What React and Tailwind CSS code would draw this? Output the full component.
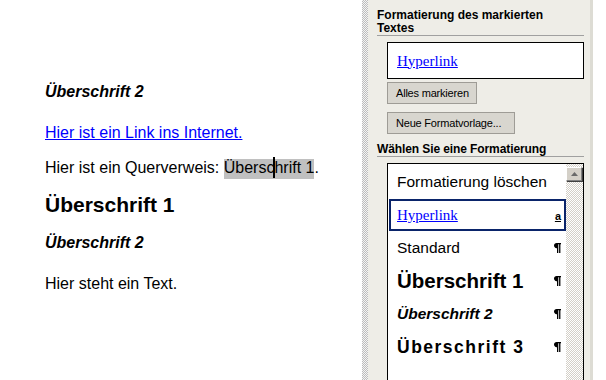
import React from "react";

const Pil = () => (
  <svg width="7" height="10" viewBox="0 0 7 10" className="self-end mb-[9px]">
    <path d="M7 0H2.6C1.1 0 0 1.1 0 2.6S1.1 5.2 2.6 5.2H3V10H4.3V1.3H5.1V10H6.4V1.3H7Z" fill="#000" />
  </svg>
);

function Item({ children, right, selected }) {
  return (
    <div
      className={
        "ml-[1px] mt-[1px] flex h-[32px] w-[177px] shrink-0 items-baseline justify-between border-2 pl-[6px] pr-[3px] " +
        (selected ? "border-[#0a246a]" : "border-transparent")
      }
    >
      {children}
      {right}
    </div>
  );
}

export default function App() {
  return (
    <div className="flex h-[380px] w-[606px] overflow-hidden bg-white">
      {/* Document */}
      <div className="w-[362px] shrink-0 pl-[45px] pt-[82px] font-['Liberation_Sans',Arial,sans-serif] text-[16px] leading-[20px] text-black">
        <p className="font-bold italic">Überschrift 2</p>
        <p className="mt-[21px] text-[#0000ff] underline">Hier ist ein Link ins Internet.</p>
        <p className="mt-[15px] whitespace-nowrap">
          Hier ist ein Querverweis:{" "}
          <span className="bg-[#c0c0c0] pb-[3px]">
            Übersc
            <span className="relative">
              <span className="absolute left-[-1px] top-[-2px] h-[21px] w-[2px] bg-black" />
              hrift 1
            </span>
          </span>
          .
        </p>
        <p className="mt-[15px] text-[21px] font-bold leading-[24px]">Überschrift 1</p>
        <p className="mt-[16px] font-bold italic">Überschrift 2</p>
        <p className="mt-[21px]">Hier steht ein Text.</p>
      </div>

      {/* Splitter */}
      <div className="w-[6px] shrink-0 bg-[repeating-conic-gradient(#bdbdbd_0_25%,#f4f4f4_0_50%)] bg-[length:2px_2px]" />

      {/* Task pane */}
      <div className="flex w-[222px] shrink-0 flex-col bg-[#eeede7] pl-[9px] pr-[6px] pt-[9px] font-['Liberation_Sans',Arial,sans-serif] text-black">
        <div className="text-[12px] font-bold leading-[13px]">
          Formatierung des markierten
          <br />
          Textes
        </div>
        <div className="h-[1px] w-[207px] bg-[#a0a0a0]" />
        <div className="ml-[10px] mt-[6px] flex h-[37px] w-[197px] items-center border border-black bg-white pl-[9px]">
          <span className="font-['Liberation_Serif',serif] text-[15px] leading-[18px] text-[#0000ff] underline">Hyperlink</span>
        </div>
        <button className="ml-[10px] mt-[3px] flex h-[22px] w-[90px] items-center border border-[#9e9c96] bg-[#d8d6cf] pl-[8px] text-[11px] tracking-[-0.2px] text-black">
          Alles markieren
        </button>
        <button className="ml-[10px] mt-[8px] flex h-[22px] w-[128px] items-center border border-[#9e9c96] bg-[#d8d6cf] pl-[8px] text-[11px] tracking-[-0.2px] text-black">
          Neue Formatvorlage...
        </button>
        <div className="mt-[9px] text-[12px] font-bold leading-[13px] tracking-[-0.1px]">Wählen Sie eine Formatierung</div>
        <div className="h-[1px] w-[207px] bg-[#a0a0a0]" />
        <div className="ml-[10px] mt-[6px] flex w-[197px] flex-1 border border-b-0 border-black bg-white">
          <div className="flex w-[178px] shrink-0 flex-col pt-[1px]">
            <Item>
              <span className="text-[15.5px] leading-[28px]">Formatierung löschen</span>
            </Item>
            <Item
              selected
              right={
                <span className="text-[11px] font-bold leading-none underline">a</span>
              }
            >
              <span className="font-['Liberation_Serif',serif] text-[15px] leading-[28px] text-[#0000ff] underline">Hyperlink</span>
            </Item>
            <Item right={<Pil />}>
              <span className="text-[15.5px] leading-[28px]">Standard</span>
            </Item>
            <Item right={<Pil />}>
              <span className="text-[20.5px] font-bold leading-[28px]">Überschrift 1</span>
            </Item>
            <Item right={<Pil />}>
              <span className="text-[15.5px] font-bold italic leading-[28px]">Überschrift 2</span>
            </Item>
            <Item right={<Pil />}>
              <span className="text-[17.5px] font-bold leading-[28px] tracking-[1.5px]">Überschrift 3</span>
            </Item>
          </div>
          <div className="flex w-[17px] shrink-0 flex-col bg-[repeating-conic-gradient(#d4d0c8_0_25%,#ffffff_0_50%)] bg-[length:2px_2px] pt-[3px]">
            <div className="flex h-[14px] w-[16px] items-center justify-center border border-b-[#808080] border-l-white border-r-[#808080] border-t-white bg-[#d4d0c8] shadow-[1px_1px_0_#404040]">
              <svg width="7" height="4" viewBox="0 0 7 4">
                <path d="M3.5 0 L7 4 L0 4 Z" fill="#6a6a6a" />
              </svg>
            </div>
          </div>
        </div>
      </div>

      <div className="w-[3px] shrink-0 bg-[#dddcd4]" />
      <div className="flex-1 bg-white" />
    </div>
  );
}
